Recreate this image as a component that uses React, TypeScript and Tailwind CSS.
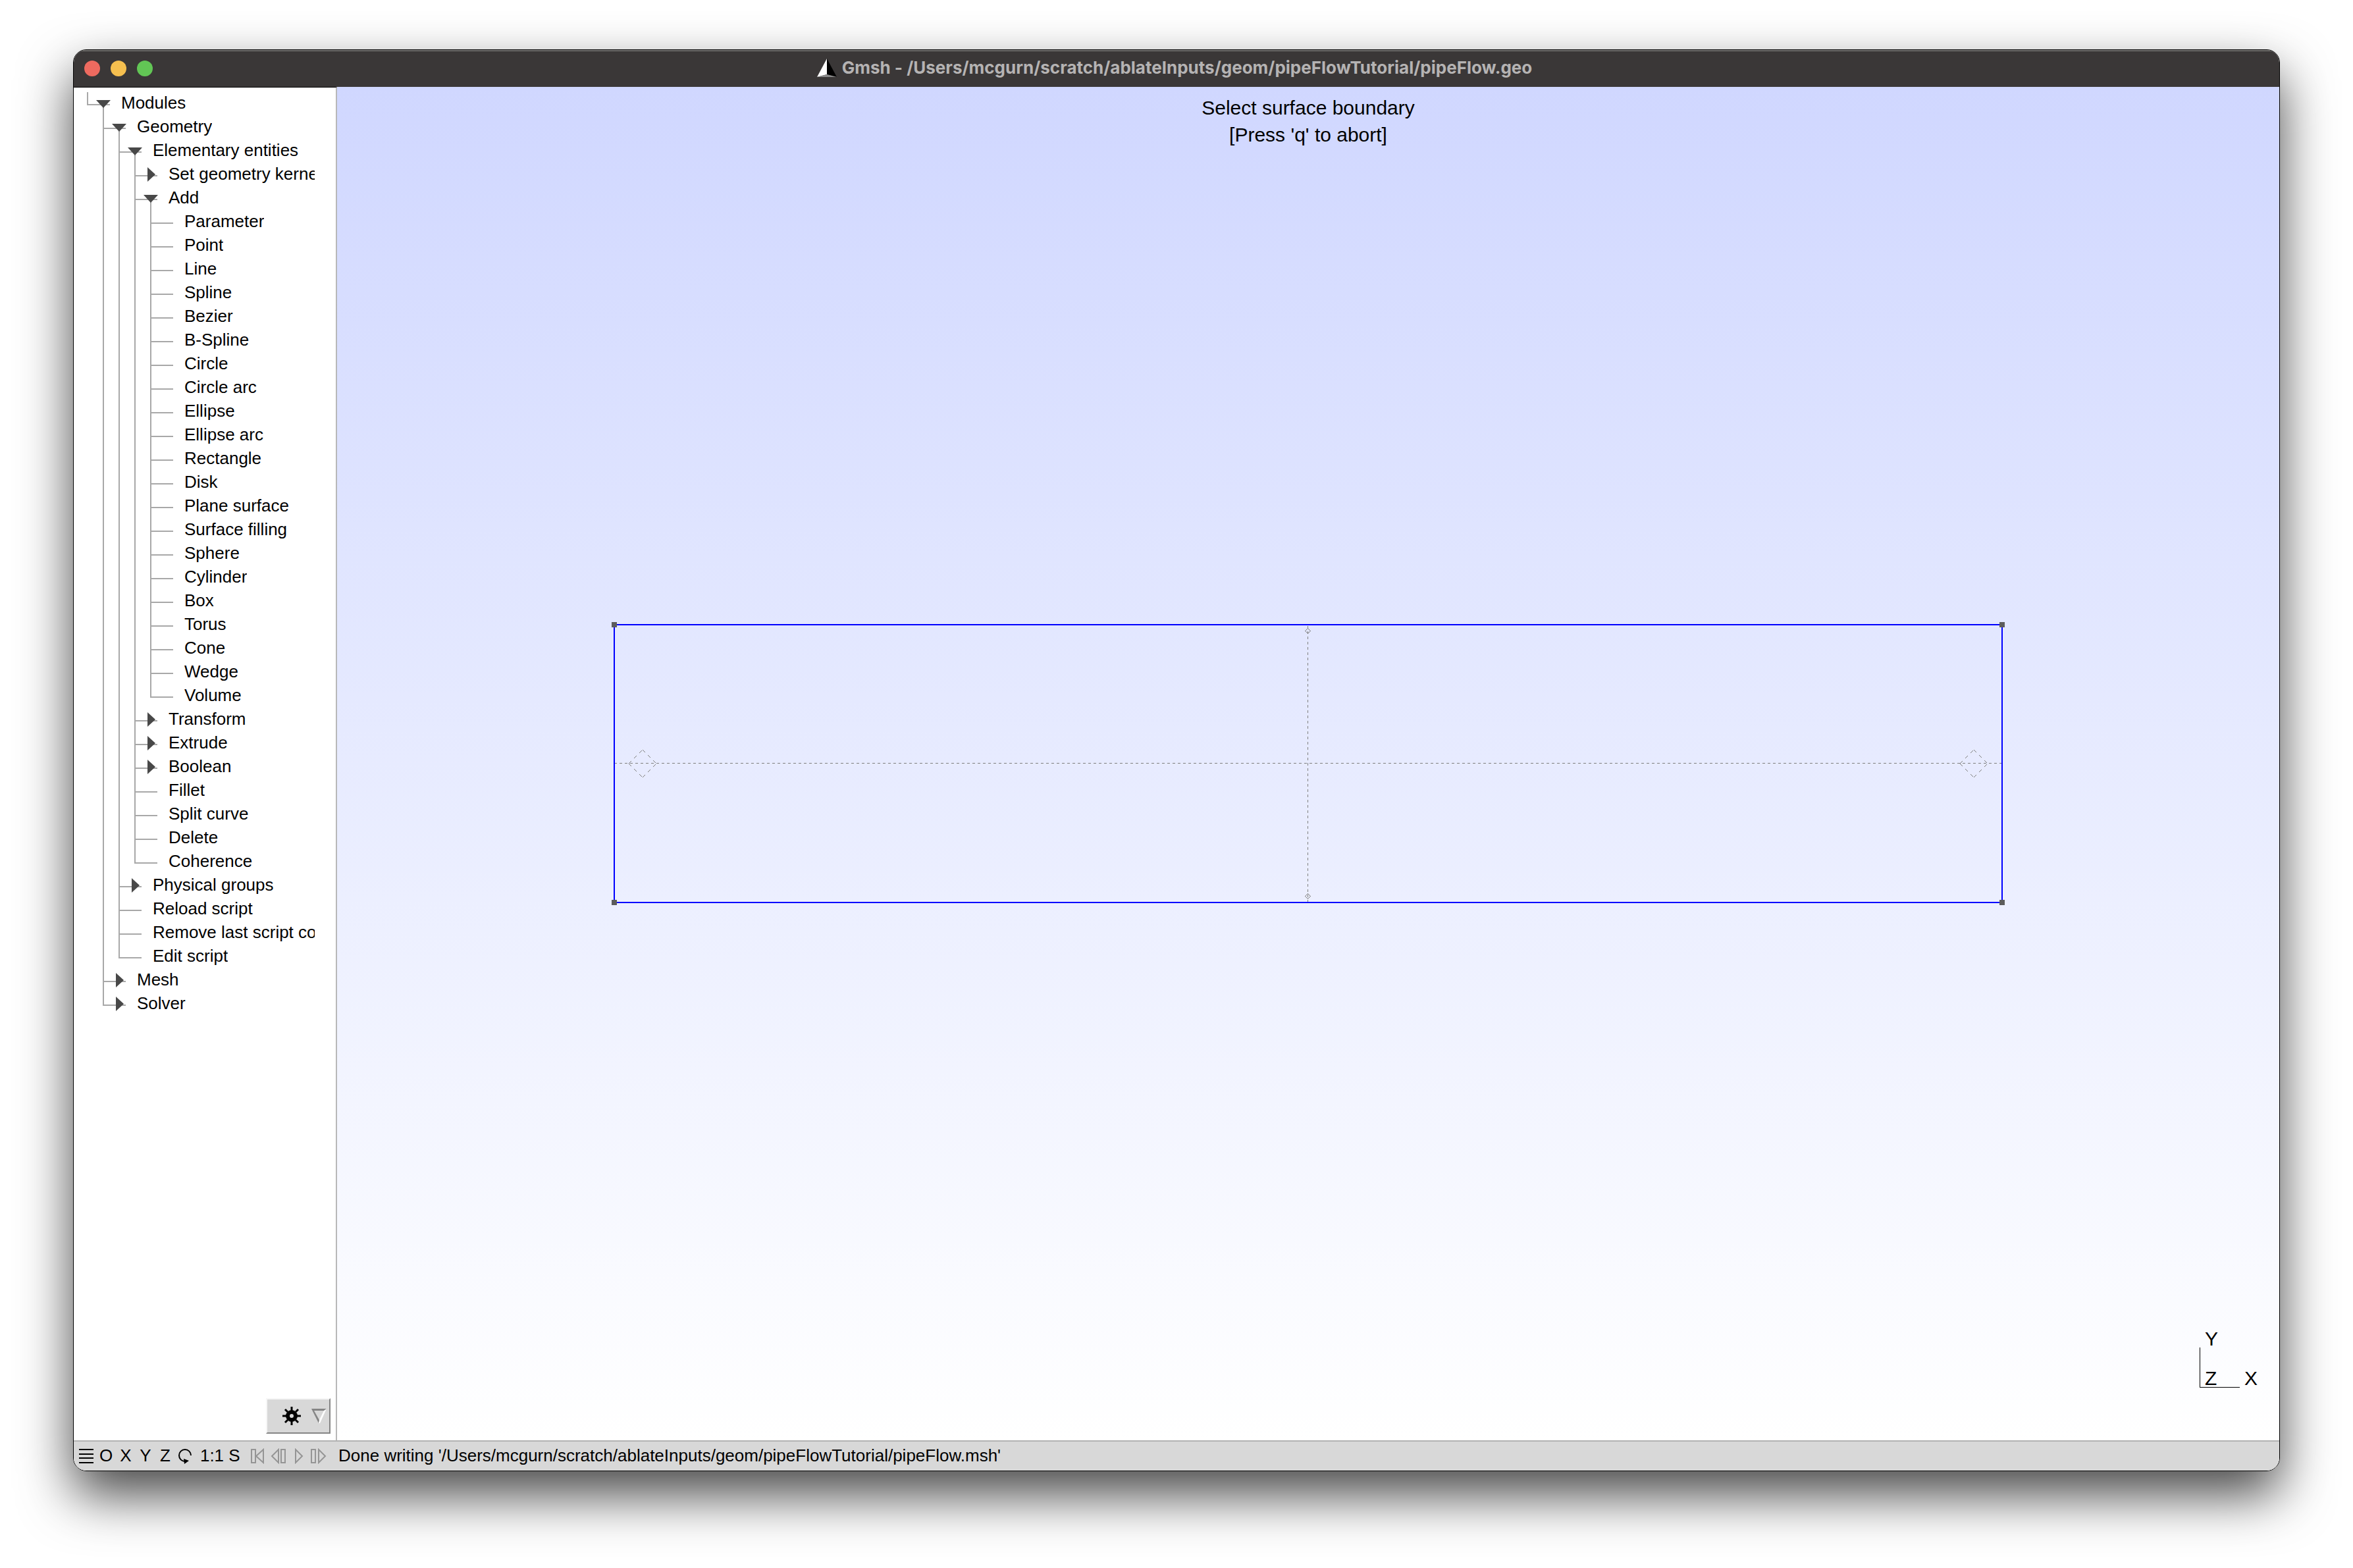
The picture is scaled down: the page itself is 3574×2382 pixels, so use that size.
import type { ReactNode } from "react";

type Node = { label: string; open?: boolean; children?: Node[] };

const leaf = (label: string): Node => ({ label });
const closed = (label: string): Node => ({ label, open: false });

const tree: Node = {
  label: "Modules",
  open: true,
  children: [
    {
      label: "Geometry",
      open: true,
      children: [
        {
          label: "Elementary entities",
          open: true,
          children: [
            closed("Set geometry kernel"),
            {
              label: "Add",
              open: true,
              children: [
                "Parameter",
                "Point",
                "Line",
                "Spline",
                "Bezier",
                "B-Spline",
                "Circle",
                "Circle arc",
                "Ellipse",
                "Ellipse arc",
                "Rectangle",
                "Disk",
                "Plane surface",
                "Surface filling",
                "Sphere",
                "Cylinder",
                "Box",
                "Torus",
                "Cone",
                "Wedge",
                "Volume",
              ].map(leaf),
            },
            closed("Transform"),
            closed("Extrude"),
            closed("Boolean"),
            leaf("Fillet"),
            leaf("Split curve"),
            leaf("Delete"),
            leaf("Coherence"),
          ],
        },
        closed("Physical groups"),
        leaf("Reload script"),
        leaf("Remove last script command"),
        leaf("Edit script"),
      ],
    },
    closed("Mesh"),
    closed("Solver"),
  ],
};

function Connector({ node, last }: { node: Node; last: boolean }) {
  return (
    <svg viewBox="0 0 52 36" className="h-9 w-[52px] shrink-0" aria-hidden="true">
      <path
        d={last ? "M1 0V19H35" : "M1 0V36M1 19H35"}
        fill="none"
        stroke="#a8a8a8"
        strokeWidth="2"
      />
      {node.open && <path d="M25 19V36" stroke="#a8a8a8" strokeWidth="2" />}
      {node.open === true && <path d="M14 12H36L25 24Z" fill="#484848" />}
      {node.open === false && <path d="M20 6V28L32 17Z" fill="#484848" />}
    </svg>
  );
}

function TreeRows({ node, guides, last }: { node: Node; guides: boolean[]; last: boolean }) {
  const childGuides = [...guides, !last];
  return (
    <li>
      <button type="button" className="flex h-9 w-full items-start overflow-hidden text-left">
        {guides.map((on, i) => (
          <span
            key={i}
            className={on ? "h-9 w-6 shrink-0 border-l-2 border-[#a8a8a8]" : "h-9 w-6 shrink-0"}
          />
        ))}
        <Connector node={node} last={last} />
        <span className="overflow-hidden whitespace-nowrap text-[26px] leading-8">
          {node.label}
        </span>
      </button>
      {node.children && (
        <ul>
          {node.children.map((c, i) => (
            <TreeRows
              key={c.label}
              node={c}
              guides={childGuides}
              last={i === node.children!.length - 1}
            />
          ))}
        </ul>
      )}
    </li>
  );
}

function TitleBar() {
  return (
    <header className="relative flex h-14 items-center justify-center bg-[#3a3737] pr-1.5 shadow-[inset_0_2px_0_#6f6e6c]">
      <div className="absolute left-4 top-4 flex gap-4">
        <button type="button" aria-label="Close" className="size-6 rounded-full bg-[#ed6a5f]" />
        <button type="button" aria-label="Minimize" className="size-6 rounded-full bg-[#f5bf4f]" />
        <button type="button" aria-label="Zoom" className="size-6 rounded-full bg-[#62c655]" />
      </div>
      <svg viewBox="0 0 30 30" className="mr-2 size-[30px]" aria-hidden="true">
        <path d="M15 0L0 28L15 24Z" fill="#ffffff" />
        <path d="M15 0V24L30 28Z" fill="#000000" />
        <path d="M0 28L15 24L30 28Z" fill="#8a8a8a" />
      </svg>
      <h1 className="whitespace-nowrap pb-0.5 font-['Inter','Liberation_Sans',sans-serif] text-[26px] font-bold leading-8 text-[#b5b3b3]">
        Gmsh - /Users/mcgurn/scratch/ablateInputs/geom/pipeFlowTutorial/pipeFlow.geo
      </h1>
    </header>
  );
}

function Sidebar() {
  return (
    <aside className="flex w-[400px] shrink-0 flex-col justify-between border-r-2 border-t border-r-[#b8b8b8] border-t-black bg-white">
      <ul className="pl-5 pr-8 pt-[7px]">
        <TreeRows node={tree} guides={[]} last />
      </ul>
      <button
        type="button"
        aria-label="Options"
        className="mb-2.5 mr-2 flex h-[54px] w-[98px] self-end border-2 border-b-[#858585] border-l-[#f6f6f6] border-r-[#858585] border-t-[#f6f6f6] bg-[#d8d8d8]"
      >
        <svg viewBox="0 0 94 50" className="h-[50px] w-[94px]" aria-hidden="true">
          <g transform="translate(37 25)" stroke="#000" fill="none">
            <circle r="6" strokeWidth="6" />
            <path
              d="M0 -14V-8M0 8V14M-14 0H-8M8 0H14M-10 -10L-6 -6M6 6L10 10M10 -10L6 -6M-6 6L-10 10"
              strokeWidth="3"
            />
          </g>
          <path d="M67 14H90L88 17H71L80 33V36H78Z" fill="#858585" />
          <path d="M90 14L80 36H78L79 31L86 17Z" fill="#ffffff" />
        </svg>
      </button>
    </aside>
  );
}

function Viewport() {
  return (
    <main className="relative flex min-w-0 flex-1 items-center justify-center bg-linear-to-b from-[#d0d7ff] to-white">
      <p className="absolute inset-x-0 top-[11px] text-center text-[30px] leading-[41px]">
        Select surface boundary
        <br />
        [Press 'q' to abort]
      </p>
      <svg viewBox="0 0 2124 438" className="w-[72%]" shapeRendering="crispEdges" role="img" aria-label="Pipe surface">
        <g fill="none" stroke="#7f7f7f" strokeWidth="1">
          <path d="M8 218.5H2115" strokeDasharray="4 4" />
          <path d="M1061.5 10V430" strokeDasharray="4 4" />
          {[51, 2073].map((cx) => (
            <g key={cx} transform={`translate(${cx} 219)`} strokeDasharray="6 5">
              <path d="M-21 0L0 -21M0 -21L21 0M-21 0L0 21M0 21L21 0" />
            </g>
          ))}
          <path d="M1061.5 13.5L1065.5 17.5L1061.5 21.5L1057.5 17.5Z" />
          <path d="M1061.5 416.5L1065.5 420.5L1061.5 424.5L1057.5 420.5Z" />
        </g>
        <path d="M8 8H2116V430H8Z" fill="none" stroke="#0000ff" strokeWidth="2" />
        <path d="M4 4h8v8h-8zM2112 4h8v8h-8zM4 426h8v8h-8zM2112 426h8v8h-8z" fill="#5c5c5c" />
      </svg>
      <div className="absolute bottom-20 right-[60px] size-[61px] border-b border-l border-black text-[30px] leading-[34px]">
        <span className="absolute bottom-14 left-[7px]">Y</span>
        <span className="absolute -bottom-1 left-[7px]">Z</span>
        <span className="absolute -bottom-1 left-[67px]">X</span>
      </div>
    </main>
  );
}

function Tool({ label, className, children }: { label: string; className: string; children: ReactNode }) {
  return (
    <button type="button" aria-label={label} className={`flex h-11 shrink-0 items-center justify-center ${className}`}>
      {children}
    </button>
  );
}

function StatusBar() {
  return (
    <footer className="flex h-[46px] items-center border-t-2 border-[#b2b2b2] bg-[#d8d8d8] pb-0.5 pl-2 text-[26px] leading-[30px]">
      <Tool label="Menu" className="w-[26px] justify-start pt-0.5">
        <svg viewBox="0 0 22 22" className="size-[22px]" shapeRendering="crispEdges">
          <path d="M0 1H22M0 8H22M0 14H22M0 21H22" stroke="#000" strokeWidth="2" />
        </svg>
      </Tool>
      <Tool label="Reset view" className="w-[30px]">O</Tool>
      <Tool label="View along X" className="w-[30px]">X</Tool>
      <Tool label="View along Y" className="w-[30px]">Y</Tool>
      <Tool label="View along Z" className="w-[30px]">Z</Tool>
      <Tool label="Rotate" className="w-[30px] pt-0.5">
        <svg viewBox="0 0 22 24" className="h-6 w-[22px]" fill="none">
          <path d="M20 11A9 9 0 1 0 11 20" stroke="#000" strokeWidth="2" />
          <path d="M9 16L17 19L10 24Z" fill="#000" />
        </svg>
      </Tool>
      <Tool label="Scale 1:1" className="w-[52px]">1:1</Tool>
      <Tool label="Selection" className="mr-3 w-4">S</Tool>
      <Tool label="First step" className="w-8 pt-0.5">
        <svg viewBox="0 0 32 24" className="h-6 w-8" fill="none" stroke="#959595" strokeWidth="2">
          <path d="M6 2H12V22H6ZM24 2V22L13 12Z" />
        </svg>
      </Tool>
      <Tool label="Previous step" className="w-8 pt-0.5">
        <svg viewBox="0 0 32 24" className="h-6 w-8" fill="none" stroke="#959595" strokeWidth="2">
          <path d="M15 2V22L5 12ZM19 2H25V22H19Z" />
        </svg>
      </Tool>
      <Tool label="Play" className="w-6 pt-0.5">
        <svg viewBox="0 0 24 24" className="size-6" fill="none" stroke="#959595" strokeWidth="2">
          <path d="M9 2V22L19 12Z" />
        </svg>
      </Tool>
      <Tool label="Next step" className="w-8 pt-0.5">
        <svg viewBox="0 0 32 24" className="h-6 w-8" fill="none" stroke="#959595" strokeWidth="2">
          <path d="M9 2H15V22H9ZM20 2V22L30 12Z" />
        </svg>
      </Tool>
      <p className="ml-[18px] whitespace-nowrap">
        Done writing '/Users/mcgurn/scratch/ablateInputs/geom/pipeFlowTutorial/pipeFlow.msh'
      </p>
    </footer>
  );
}

export default function App() {
  return (
    <div className="flex h-screen flex-col overflow-hidden bg-white px-[111px] pb-[147px] pt-[75px] font-['Liberation_Sans',Arial,sans-serif] text-black">
      <div className="flex flex-1 flex-col rounded-[20px] border border-black shadow-[0_36px_80px_rgba(0,0,0,0.72)]">
        <div className="flex flex-1 flex-col overflow-hidden rounded-[19px]">
          <TitleBar />
          <div className="flex flex-1">
            <Sidebar />
            <Viewport />
          </div>
          <StatusBar />
        </div>
      </div>
    </div>
  );
}
